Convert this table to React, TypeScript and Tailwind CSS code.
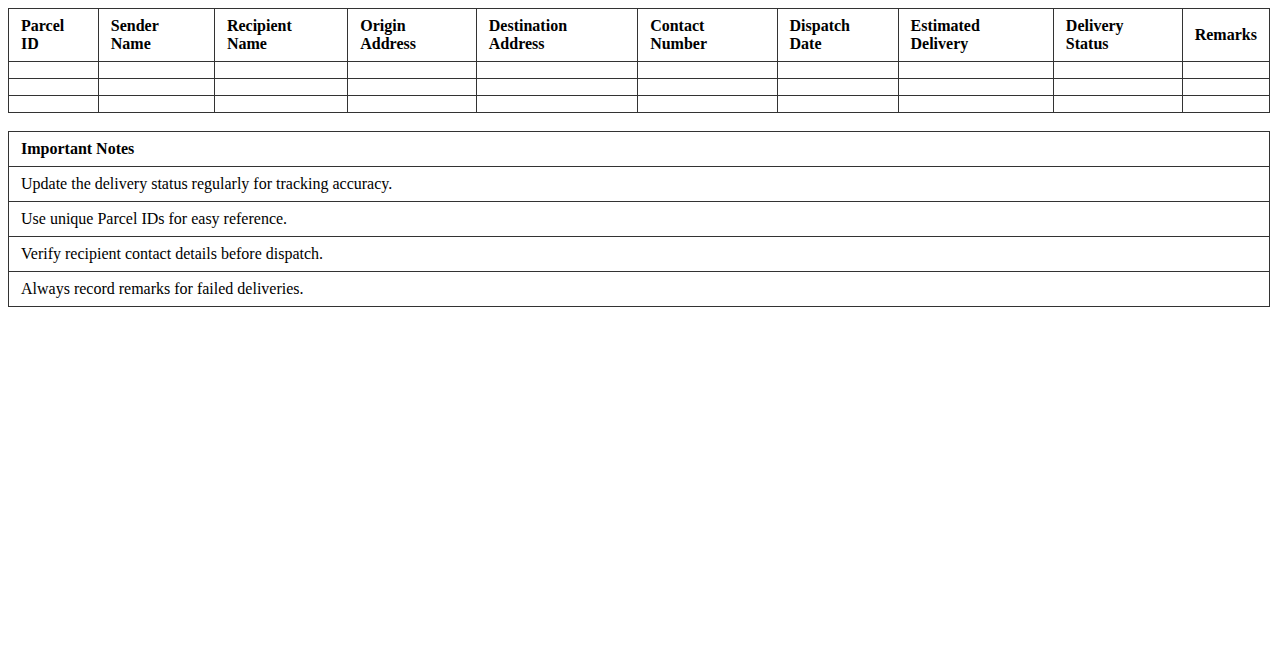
import React from 'react';

const headers = [
  ['Parcel', 'ID'],
  ['Sender', 'Name'],
  ['Recipient', 'Name'],
  ['Origin', 'Address'],
  ['Destination', 'Address'],
  ['Contact', 'Number'],
  ['Dispatch', 'Date'],
  ['Estimated', 'Delivery'],
  ['Delivery', 'Status'],
  ['Remarks'],
];

const notes = [
  'Update the delivery status regularly for tracking accuracy.',
  'Use unique Parcel IDs for easy reference.',
  'Verify recipient contact details before dispatch.',
  'Always record remarks for failed deliveries.',
];

export default function App() {
  return (
    <div className="min-h-screen bg-white p-2 text-black font-['Liberation_Serif','Times_New_Roman',serif] text-base leading-[18px]">
      <table className="w-full border-collapse">
        <thead>
          <tr>
            {headers.map((h) => (
              <th key={h.join(' ')} className="border border-[#333] px-3 py-2 text-left align-middle font-bold">
                {h.join(' ')}
              </th>
            ))}
          </tr>
        </thead>
        <tbody>
          {[0, 1, 2].map((r) => (
            <tr key={r}>
              {headers.map((h) => (
                <td key={h.join(' ')} className="border border-[#333] px-3 py-2"></td>
              ))}
            </tr>
          ))}
        </tbody>
      </table>

      {/* Notes */}
      <table className="mt-[18px] w-full border-collapse">
        <thead>
          <tr>
            <th className="border border-[#333] px-3 py-2 text-left font-bold">Important Notes</th>
          </tr>
        </thead>
        <tbody>
          {notes.map((n) => (
            <tr key={n}>
              <td className="border border-[#333] px-3 py-2">{n}</td>
            </tr>
          ))}
        </tbody>
      </table>
    </div>
  );
}
